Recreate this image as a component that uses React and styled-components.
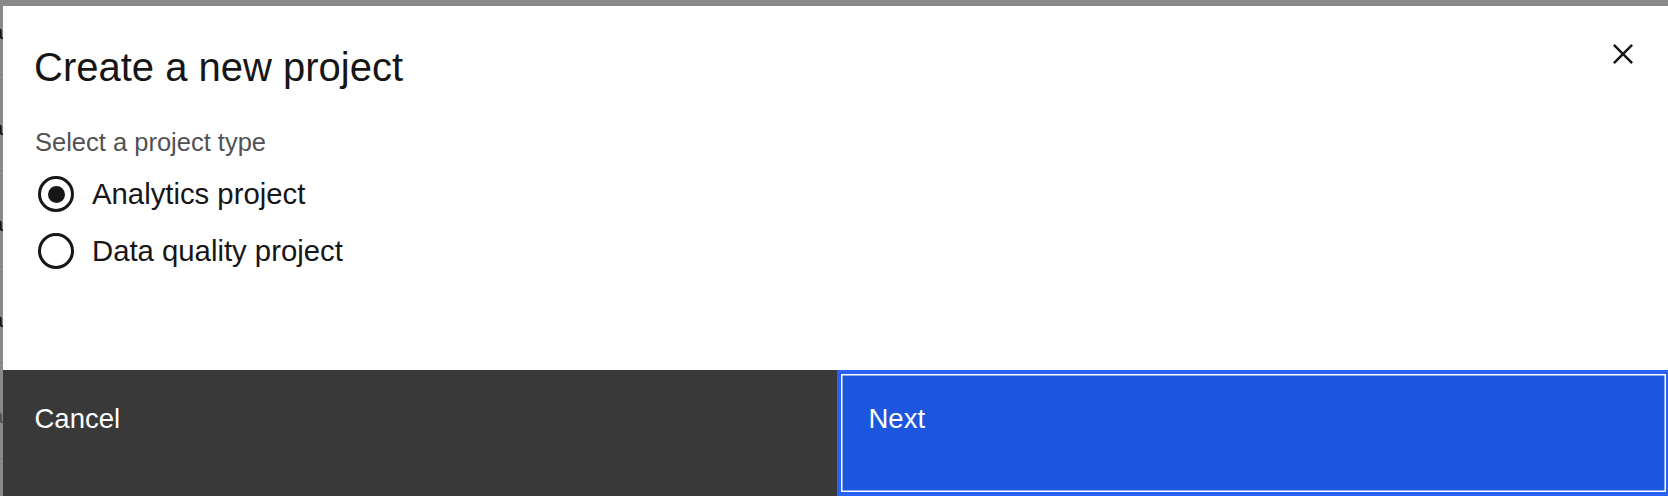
import React, { useState } from "react";
import styled, { createGlobalStyle } from "styled-components";

const Global = createGlobalStyle`
  html, body { margin: 0; padding: 0; background: #ffffff; overflow: hidden; }
  body { font-family: "Liberation Sans", Arial, sans-serif; color: #161616; }
  * { box-sizing: border-box; }
`;

const Page = styled.div`
  width: 1668px;
  height: 496px;
  overflow: hidden;
  background: #ffffff;
`;

const RowList = styled.div`
  margin-top: -21px;
  display: flex;
  flex-direction: column;
`;

const BgRow = styled.div`
  height: 96px;
  display: flex;
  align-items: center;
  padding-top: 10px;
  border-bottom: 1px solid #e0e0e0;
`;

const BgCell = styled.div`
  width: 3.5px;
  display: flex;
  justify-content: flex-end;
  white-space: nowrap;
  font-size: 21px;
  color: ${(p) => (p.$muted ? "#8d8d8d" : "#161616")};
`;

const Overlay = styled.div`
  position: fixed;
  inset: 0;
  background: rgba(22, 22, 22, 0.5);
`;

const Modal = styled.div`
  position: fixed;
  top: 6px;
  left: 3px;
  width: 1667px;
  background: #ffffff;
  display: flex;
  flex-direction: column;
`;

const Top = styled.div`
  position: relative;
  height: 364px;
  display: flex;
  flex-direction: column;
`;

const Header = styled.div`
  padding: 40.5px 31px 0;
`;

const Title = styled.h2`
  margin: 0;
  font-size: 40px;
  line-height: 40px;
  font-weight: 400;
  color: #161616;
`;

const CloseButton = styled.button`
  position: absolute;
  top: 28px;
  right: 27px;
  width: 40px;
  height: 40px;
  padding: 0;
  border: none;
  background: transparent;
  display: flex;
  cursor: pointer;
`;

const Body = styled.div`
  padding: 42.5px 32px 0;
  display: flex;
  flex-direction: column;
`;

const Legend = styled.div`
  font-size: 25.5px;
  line-height: 26px;
  color: #525252;
`;

const RadioGroup = styled.div`
  margin-top: 21px;
  display: flex;
  flex-direction: column;
  gap: 21px;
`;

const RadioRow = styled.label`
  height: 36px;
  display: flex;
  align-items: center;
  cursor: pointer;
`;

const Circle = styled.span`
  width: 36px;
  height: 36px;
  margin: 0 18px 0 3px;
  border: 3px solid #161616;
  border-radius: 50%;
  display: flex;
  align-items: center;
  justify-content: center;
  flex-shrink: 0;

  &::after {
    content: "";
    width: 17px;
    height: 17px;
    border-radius: 50%;
    background: #161616;
    display: ${(p) => (p.$checked ? "block" : "none")};
  }
`;

const RadioLabel = styled.span`
  font-size: 29.3px;
  line-height: 36px;
  color: #161616;
`;

const Footer = styled.div`
  height: 126px;
  display: grid;
  grid-template-columns: 1fr 1fr;
`;

const FooterButton = styled.button`
  height: 126px;
  margin: 0;
  font-family: "Liberation Sans", Arial, sans-serif;
  font-size: 27.5px;
  line-height: 35.4px;
  color: #ffffff;
  text-align: left;
  display: flex;
  align-items: flex-start;
  cursor: pointer;
  background: ${(p) => (p.$primary ? "#1c56df" : "#393939")};
  border: ${(p) => (p.$primary ? "4px solid #2862f5" : "none")};
  box-shadow: ${(p) => (p.$primary ? "inset 0 0 0 1.5px #ffffff" : "none")};
  padding: ${(p) => (p.$primary ? "26.75px 28px 0" : "30.75px 31.5px 0")};
`;

const options = ["Analytics project", "Data quality project"];

export default function App() {
  const [selected, setSelected] = useState(0);
  return (
    <>
      <Global />
      <Page>
        <RowList>
          {[0, 1, 2, 3, 4, 5].map((i) => (
            <BgRow key={i}>
              <BgCell $muted={i === 4}>Data</BgCell>
            </BgRow>
          ))}
        </RowList>
      </Page>
      <Overlay />
      <Modal role="dialog" aria-label="Create a new project">
        <Top>
          <Header>
            <Title>Create a new project</Title>
          </Header>
          <CloseButton aria-label="Close">
            <svg width="40" height="40" viewBox="0 0 32 32" fill="#161616">
              <path d="M24 9.4L22.6 8 16 14.6 9.4 8 8 9.4 14.6 16 8 22.6 9.4 24 16 17.4 22.6 24 24 22.6 17.4 16 24 9.4z" />
            </svg>
          </CloseButton>
          <Body>
            <Legend>Select a project type</Legend>
            <RadioGroup>
              {options.map((o, i) => (
                <RadioRow key={o} onClick={() => setSelected(i)}>
                  <Circle $checked={selected === i} />
                  <RadioLabel>{o}</RadioLabel>
                </RadioRow>
              ))}
            </RadioGroup>
          </Body>
        </Top>
        <Footer>
          <FooterButton>Cancel</FooterButton>
          <FooterButton $primary>Next</FooterButton>
        </Footer>
      </Modal>
    </>
  );
}
